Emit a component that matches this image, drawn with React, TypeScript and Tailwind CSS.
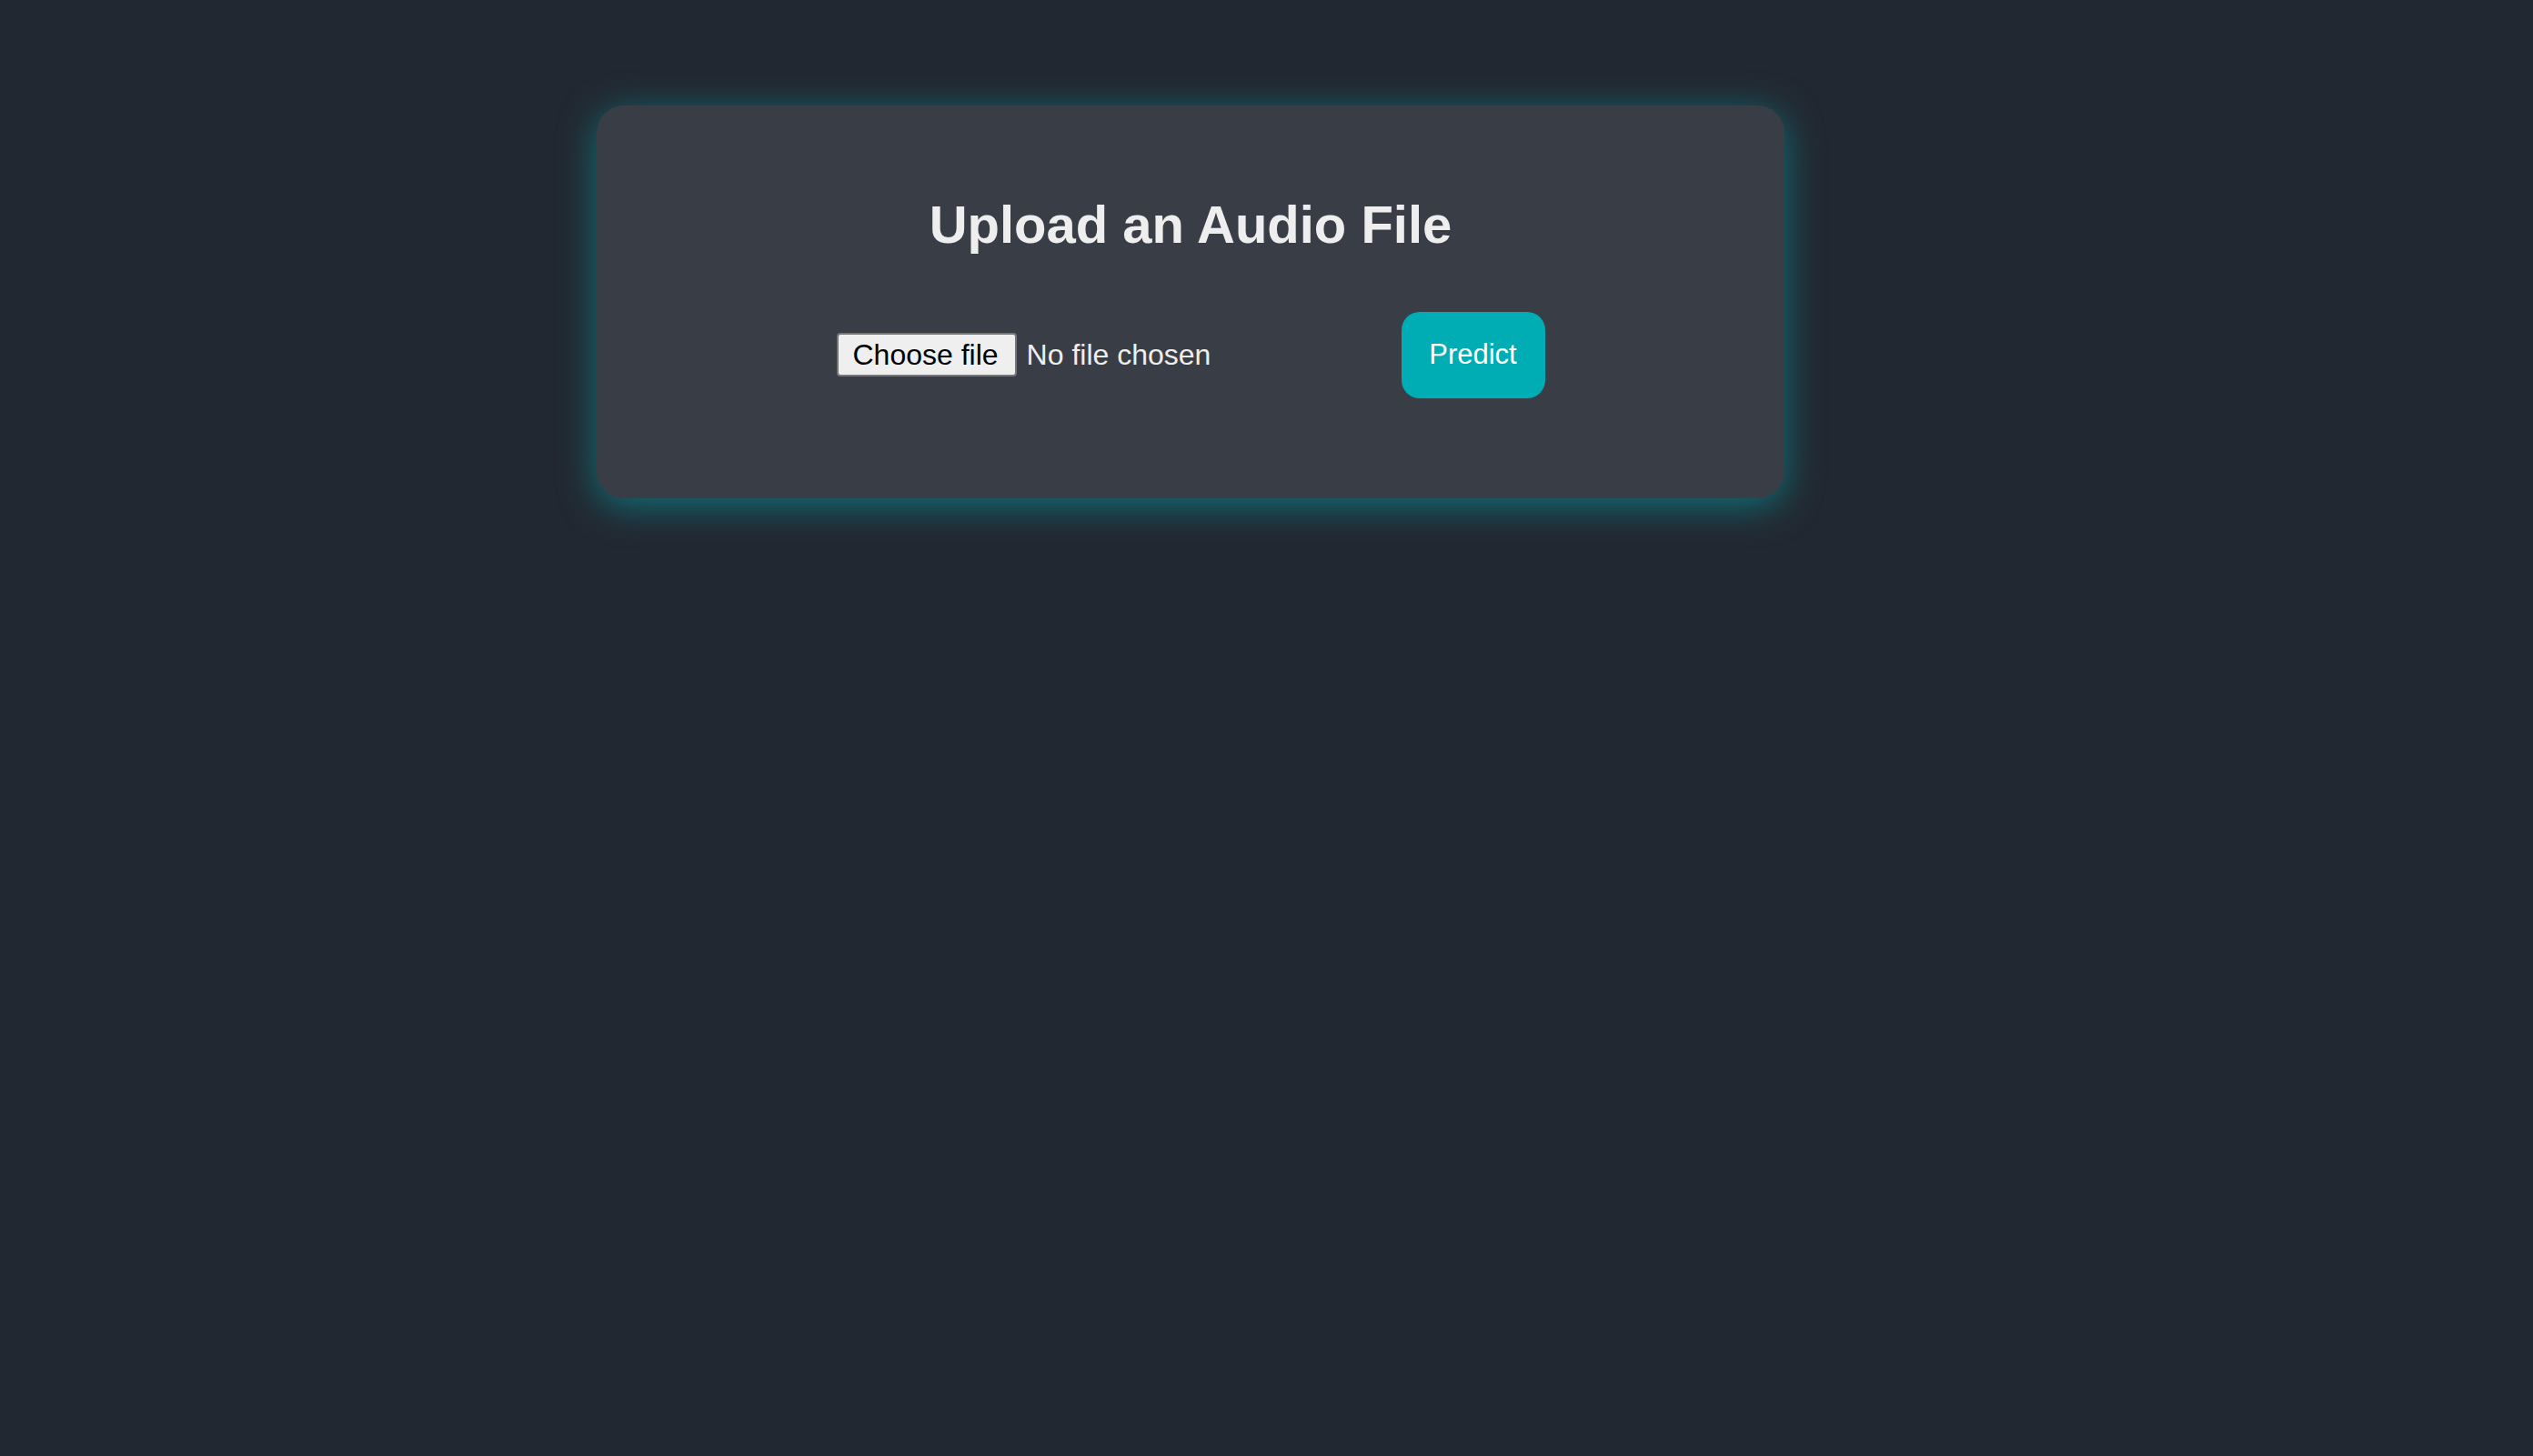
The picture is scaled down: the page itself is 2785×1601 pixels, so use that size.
const App = () => {
  return (
    <div className="min-h-screen bg-[#222831] pt-[116px] font-['Liberation_Sans',Arial,sans-serif] text-[#eeeeee]">
      <main className="ml-[656px] w-[1306px] rounded-[30px] bg-[#393e46] pt-[98px] pb-[110px] shadow-[0_8px_40px_rgba(0,173,181,0.55)]">
        <h1 className="text-center text-[58px] font-bold leading-[1.15]">Upload an Audio File</h1>
        <form className="mt-[62px] flex items-center justify-center gap-[31px]">
          <label className="flex w-[590px] cursor-pointer items-center gap-[11px]">
            <input type="file" accept="audio/*" className="sr-only" />
            <span className="flex h-[48px] items-center rounded-[4px] border-2 border-[#767676] bg-[#efefef] pl-[16px] pr-[18px] text-[32px] text-black">
              Choose file
            </span>
            <span className="text-[32px]">No file chosen</span>
          </label>
          <button
            type="submit"
            className="h-[95px] w-[158px] rounded-[20px] bg-[#00adb5] text-[31px] text-white">
            Predict
          </button>
        </form>
      </main>
    </div>
  )
}
export default App
